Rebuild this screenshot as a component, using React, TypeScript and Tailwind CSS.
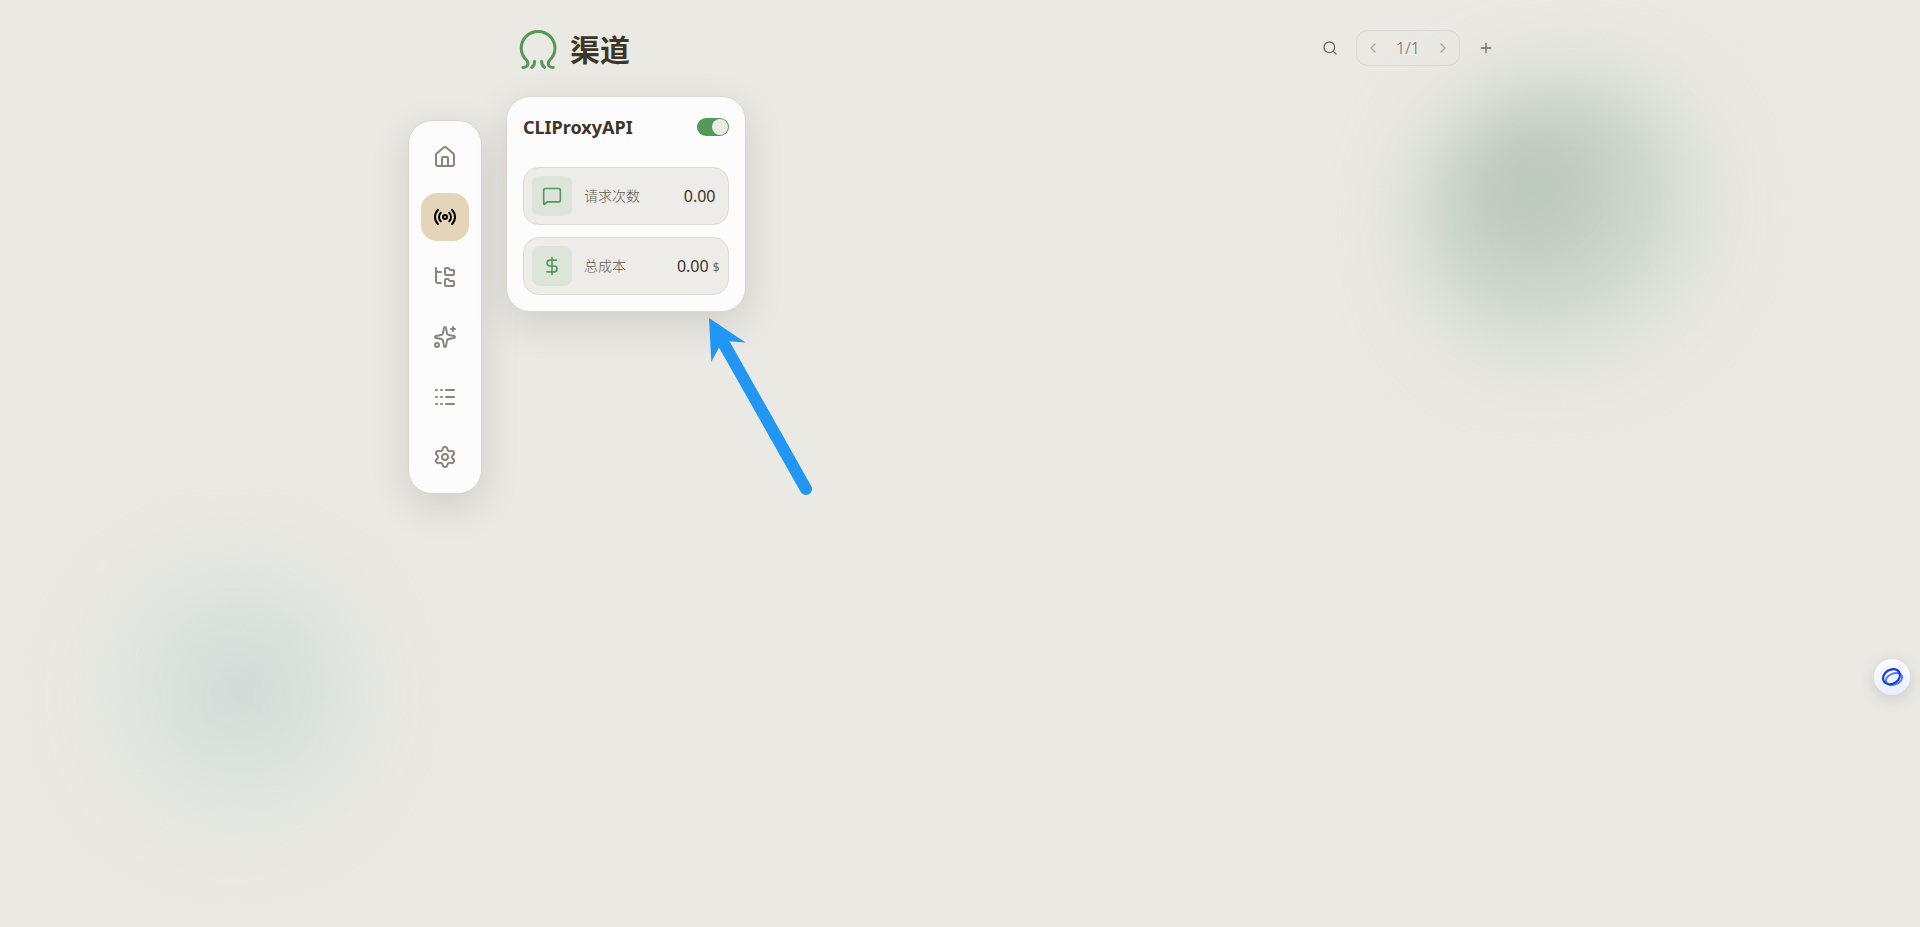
import { useState } from "react";
import type { ReactNode } from "react";
import {
  ChevronLeft,
  ChevronRight,
  DollarSign,
  FolderTree,
  House,
  Logs,
  MessageSquare,
  Plus,
  Radio,
  Search,
  Settings,
  Sparkles,
} from "lucide-react";

const navItems = [
  { id: "home", label: "首页", icon: House },
  { id: "channel", label: "渠道", icon: Radio },
  { id: "group", label: "分组", icon: FolderTree },
  { id: "model", label: "模型", icon: Sparkles },
  { id: "log", label: "日志", icon: Logs },
  { id: "setting", label: "设置", icon: Settings },
];

function Logo() {
  return (
    <svg width="40" height="42" viewBox="0 0 40 42" fill="none" stroke="#539a58" strokeWidth="3" strokeLinecap="round" aria-hidden="true">
      <path d="M4.900 38.400c4.200.2 6-2.500 4.400-6.400C6 29 3.200 24.500 3.200 19.300a16.900 16.900 0 0 1 33.800 0c0 5.200-2.800 9.700-6.100 12.700-1.600 3.900.2 6.600 4.400 6.400" />
      <path d="M16.600 32.200c0 3-.8 4.900-2.900 6.200" />
      <path d="M23.600 32.200c0 3 .8 4.900 2.900 6.200" />
    </svg>
  );
}

function Background() {
  return (
    <div className="pointer-events-none absolute inset-0 overflow-hidden" aria-hidden="true">
      <div className="absolute top-20 right-[212px] h-70 w-72 rounded-[55%_45%_60%_40%/50%_45%_55%_50%] bg-[radial-gradient(circle_at_36%_34%,#b4c2b6,#cdd7cb_50%,#e3e5de_80%)] blur-2xl" />
      <div className="absolute bottom-[102px] left-[104px] size-64 rounded-full bg-[radial-gradient(circle_at_55%_45%,#c9d8d6,#dce3dd_50%,#e7e8e1_75%)] blur-2xl" />
    </div>
  );
}

function NavBar() {
  const [active, setActive] = useState("channel");

  return (
    <nav className="mt-[120px] flex flex-col gap-3 self-start rounded-3xl border border-[#dbd6c9] bg-[#fcfcfc] p-3 shadow-[0_12px_40px_rgba(0,0,0,0.12)]">
      {navItems.map(({ id, label, icon: Icon }) => (
        <button
          key={id}
          type="button"
          aria-label={label}
          onClick={() => setActive(id)}
          className={
            active === id
              ? "flex size-12 items-center justify-center rounded-2xl bg-[#e5d5b8] text-black"
              : "flex size-12 items-center justify-center rounded-2xl text-[#8a857b]"
          }
        >
          <Icon size={24} strokeWidth={2} />
        </button>
      ))}
    </nav>
  );
}

function Header() {
  return (
    <header className="flex items-start justify-between px-2 pt-6">
      <div className="flex items-center gap-3 pt-[5px] pl-1">
        <Logo />
        <h1 className="text-3xl leading-10 font-bold">渠道</h1>
      </div>
      <div className="flex items-center gap-2 pt-[6px] text-[#716b5f]">
        <button type="button" aria-label="搜索" className="flex size-9 items-center justify-center">
          <Search size={16} />
        </button>
        <div className="flex h-9 w-[104px] items-center justify-between rounded-xl border border-[#dcd8cd] px-2">
          <button type="button" aria-label="上一页" className="opacity-50">
            <ChevronLeft size={16} />
          </button>
          <span className="text-base font-light">1/1</span>
          <button type="button" aria-label="下一页" className="opacity-50">
            <ChevronRight size={16} />
          </button>
        </div>
        <button type="button" aria-label="添加" className="flex size-9 items-center justify-center">
          <Plus size={16} />
        </button>
      </div>
    </header>
  );
}

function StatRow({ icon, label, value, unit }: { icon: ReactNode; label: string; value: string; unit?: string }) {
  return (
    <div className="flex items-center gap-3 rounded-2xl border border-[#dfdbd1] bg-[#eeece8] p-2">
      <span className="flex size-10 items-center justify-center rounded-lg bg-[#dde4d9] text-[#539a58]">{icon}</span>
      <span className="flex-1 text-sm font-light text-[#5f594d]">{label}</span>
      <span className="flex items-baseline gap-1 text-base">
        {value}
        <span className="text-xs text-[#716b5f]">{unit}</span>
      </span>
    </div>
  );
}

function ChannelCard() {
  const [enabled, setEnabled] = useState(true);

  return (
    <article className="flex h-54 flex-col justify-between rounded-3xl border border-[#dbd6c9] bg-[#fcfcfc] p-4 shadow-[0_12px_40px_rgba(0,0,0,0.12)]">
      <div className="flex items-center justify-between">
        <h2 className="text-lg font-bold">CLIProxyAPI</h2>
        <button
          type="button"
          role="switch"
          aria-checked={enabled}
          aria-label="启用 CLIProxyAPI"
          onClick={() => setEnabled(!enabled)}
          className={
            enabled
              ? "flex h-[18px] w-8 items-center justify-end rounded-full bg-[#539a58] p-px"
              : "flex h-[18px] w-8 items-center justify-start rounded-full bg-[#d5d1c6] p-px"
          }
        >
          <span className="size-4 rounded-full bg-[#eae9e3]" />
        </button>
      </div>
      <div className="flex flex-col gap-3">
        <StatRow icon={<MessageSquare size={20} />} label="请求次数" value="0.00" />
        <StatRow icon={<DollarSign size={20} />} label="总成本" value="0.00" unit="$" />
      </div>
    </article>
  );
}

function Pointer() {
  return (
    <svg className="pointer-events-none absolute top-[222px] left-[202px]" width="106" height="180" viewBox="0 0 106 180" fill="#2196f3" aria-hidden="true">
      <path d="M1 0 37.500 24.500 21.500 23.300 103.200 168a6 6 0 0 1-10.500 6L11 29.500 3.300 44Z" />
    </svg>
  );
}

function Assistant() {
  return (
    <button
      type="button"
      aria-label="助手"
      className="fixed right-[10px] bottom-[232px] flex size-9 items-center justify-center rounded-full bg-linear-to-b from-white to-[#e9ecff] shadow-[0_4px_16px_rgba(0,0,0,0.14)]"
    >
      <svg width="24" height="24" viewBox="0 0 24 24" fill="none" strokeWidth="2" aria-hidden="true">
        <ellipse cx="14" cy="14" rx="8.500" ry="5.500" stroke="#4f7df6" transform="rotate(-20 14 14)" />
        <ellipse cx="11.500" cy="11.700" rx="9" ry="7" stroke="#1238f2" strokeWidth="2.200" transform="rotate(-32 11.500 11.700)" />
      </svg>
    </button>
  );
}

export default function App() {
  return (
    <div className="relative min-h-screen bg-[#eae9e3] font-['Noto_Sans','Noto_Sans_CJK_SC',sans-serif] text-[#3d3528]">
      <Background />
      <div className="relative mx-auto flex max-w-6xl gap-6 px-6">
        <NavBar />
        <div className="flex-1">
          <Header />
          <main className="relative mt-[25px] grid grid-cols-4 gap-4">
            <ChannelCard />
            <Pointer />
          </main>
        </div>
      </div>
      <Assistant />
    </div>
  );
}
